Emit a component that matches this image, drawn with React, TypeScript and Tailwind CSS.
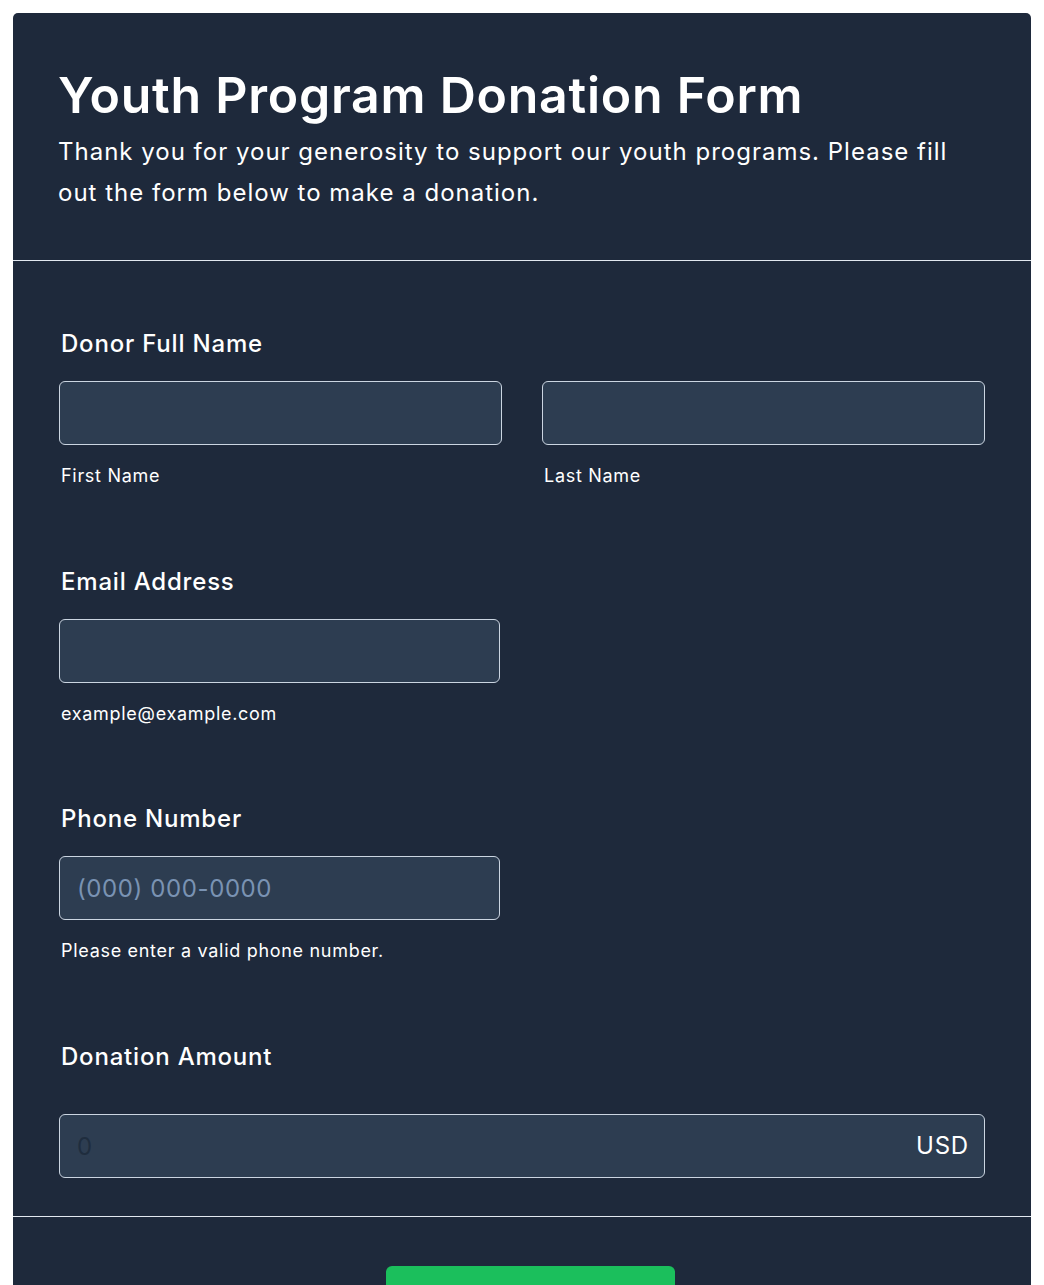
export default function App() {
  return (
    <div className="min-h-screen bg-white p-[13px] font-['Inter',sans-serif]">
      <div className="overflow-hidden rounded-t-[5px] bg-[#1e293b] text-white">
        <div className="border-b border-[#e2e8f0] pb-[47px] pl-[45px] pr-[46px] pt-[52px]">
          <h1 className="text-[50px] font-semibold leading-[60px] tracking-[0.75px] text-white">
            Youth Program Donation Form
          </h1>
          <p className="mt-[6px] text-[24px] leading-[41px] tracking-[1px] text-white">
            Thank you for your generosity to support our youth programs. Please fill out the form below to make a
            donation.
          </p>
        </div>

        <div className="border-b border-[#e2e8f0] px-[46px] pb-[38px] pt-[67px]">
          <div>
            <label className="block px-[2px] text-[24px] font-medium leading-[32px] tracking-[0.8px]">
              Donor Full Name
            </label>
            <div className="mt-[21px] grid grid-cols-2 gap-[40px]">
              <div>
                <input className="block h-[64px] w-full rounded-[6px] border border-[#cbd5e1] bg-[#2d3d51] px-[17px] text-[24px] text-white outline-none" />
                <span className="mt-[18px] block px-[2px] text-[18px] leading-[26px] tracking-[0.7px]">First Name</span>
              </div>
              <div>
                <input className="block h-[64px] w-full rounded-[6px] border border-[#cbd5e1] bg-[#2d3d51] px-[17px] text-[24px] text-white outline-none" />
                <span className="mt-[18px] block px-[2px] text-[18px] leading-[26px] tracking-[0.7px]">Last Name</span>
              </div>
            </div>
          </div>

          <div className="mt-[77px]">
            <label className="block px-[2px] text-[24px] font-medium leading-[32px] tracking-[0.8px]">
              Email Address
            </label>
            <input className="mt-[21px] block h-[64px] w-[441px] rounded-[6px] border border-[#cbd5e1] bg-[#2d3d51] px-[17px] text-[24px] text-white outline-none" />
            <span className="mt-[18px] block px-[2px] text-[18px] leading-[26px] tracking-[0.7px]">
              example@example.com
            </span>
          </div>

          <div className="mt-[76px]">
            <label className="block px-[2px] text-[24px] font-medium leading-[32px] tracking-[0.8px]">
              Phone Number
            </label>
            <input
              placeholder="(000) 000-0000"
              className="mt-[21px] block h-[64px] w-[441px] rounded-[6px] border border-[#cbd5e1] bg-[#2d3d51] px-[17px] text-[24px] tracking-[0.6px] text-white outline-none placeholder:text-[#7a93b3]"
            />
            <span className="mt-[18px] block px-[2px] text-[18px] leading-[26px] tracking-[0.7px]">
              Please enter a valid phone number.
            </span>
          </div>

          <div className="mt-[77px]">
            <label className="block px-[2px] text-[24px] font-medium leading-[32px] tracking-[0.8px]">
              Donation Amount
            </label>
            <div className="mt-[41px] flex h-[64px] w-full items-center rounded-[6px] border border-[#cbd5e1] bg-[#2d3d51] pr-[15px]">
              <input
                placeholder="0"
                className="h-full min-w-0 flex-1 bg-transparent px-[17px] text-[24px] text-white outline-none placeholder:text-[#1f2d3e]"
              />
              <span className="text-[24px] leading-none tracking-[0.8px] text-white">USD</span>
            </div>
          </div>
        </div>

        <div className="flex justify-center pl-[17px] pt-[49px]">
          <button className="h-[60px] w-[289px] rounded-[6px] bg-[#1bbf5c] text-[24px] font-semibold text-white">
            Donate Now
          </button>
        </div>
      </div>
    </div>
  );
}
